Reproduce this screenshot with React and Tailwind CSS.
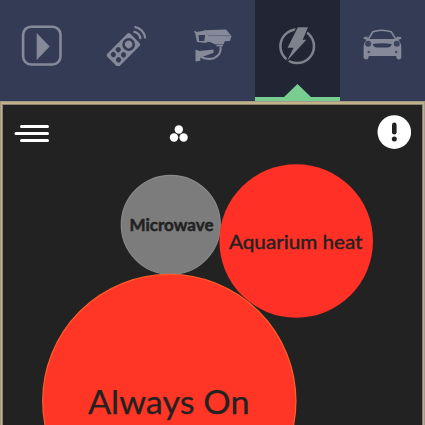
const INK = '#858999';

function PlayIcon() {
  return (
    <svg viewBox="0.5 0.5 44 44" className="size-11" fill="none">
      <rect x="2.600" y="5.200" width="37.400" height="37.800" rx="8" stroke={INK} strokeWidth="2.600" />
      <path d="M16.200 11.500v27l13-13.500z" fill={INK} />
    </svg>
  );
}

function RemoteIcon() {
  return (
    <svg viewBox="1 0 44 44" className="size-11" fill="none">
      <g transform="rotate(45 18.500 27.500)">
        <rect x="10" y="11.500" width="17.400" height="32.600" rx="2.600" fill={INK} />
        <circle cx="18.600" cy="20.300" r="6.400" fill="#343b55" />
        <circle cx="18.600" cy="20.300" r="3.700" fill={INK} />
        <circle cx="14.900" cy="31.300" r="2.600" fill="#343b55" />
        <circle cx="22.300" cy="31.300" r="2.600" fill="#343b55" />
        <circle cx="14.900" cy="38.300" r="2.600" fill="#343b55" />
        <circle cx="22.300" cy="38.300" r="2.600" fill="#343b55" />
      </g>
      <path d="M28.500 9.700a8.500 8.500 0 0 1 7 7.500M29.500 4.900a12.500 12.500 0 0 1 10.700 11.500" stroke={INK} strokeWidth="2.300" />
    </svg>
  );
}

function CameraIcon() {
  return (
    <svg viewBox="0 0 44 44" className="size-11" fill="none">
      <path d="M13 8.200l22-.7 5.500 6.500-1.500 5-24 1z" fill={INK} />
      <path d="M13.500 9l4 4.500 22 0.300" stroke="#5c6277" strokeWidth="0.800" />
      <path d="M4 10.200l10-1.700 3 4.500-1.500 8-9.500-1z" fill={INK} />
      <path d="M7.500 13h6.700l-1 6H8z" fill="#343b55" />
      <path d="M3.300 9.300l3 2" stroke={INK} strokeWidth="1.500" />
      <path d="M17 19l17 0-1.500 3.500h-8z" fill={INK} />
      <path d="M25.500 23.700h6.500" stroke={INK} strokeWidth="1.400" />
      <path d="M29.500 24.500c1 7-3.500 11.500-9 12.200-5 .6-8.500-.3-11-2" stroke={INK} strokeWidth="2.100" />
      <path d="M4.500 27.500l4 1.500 14-1.400v3.200l-13.200 5v3l-4.800.8z" fill={INK} />
    </svg>
  );
}

function PowerIcon() {
  return (
    <svg viewBox="0 0 44 44" className="size-11" fill="none">
      <circle cx="21.200" cy="24.200" r="16.800" stroke="#7f828c" strokeWidth="2.500" />
      <path d="M21.500 4.500h11.500l-5.300 12.500h4.300L8.300 43l8.200-16.500h-6z" fill="#7f828c" stroke="#222634" strokeWidth="1.300" />
    </svg>
  );
}

function CarIcon() {
  return (
    <svg viewBox="0.7 0 44 44" className="size-11" fill="none">
      <path d="M7.500 18l5-8.200c5-1.800 13-1.800 18.500 0l5 8.200" stroke={INK} strokeWidth="1.600" />
      <path d="M8 17h27.500l1.500-2.500 4 .7v1.600l-3 .9c2 2 3 4.500 3 8V35c0 1.500-.8 2.500-2.300 2.500S36 36.500 36 35v-1H8.300v1c0 1.500-1 2.500-2.500 2.500S3.300 36.500 3.300 35v-9c0-3.500.8-6.300 3-8.300l-3-.9v-1.600l3.500-.7z" fill={INK} />
      <path d="M12.500 22c6-1 12-1 19 0-.4 2.500-2.500 3.500-4.500 3.500H17c-2.500 0-4-1-4.500-3.500z" fill="#343b55" />
      <circle cx="7.800" cy="21.800" r="3" fill="#3d445e" />
      <circle cx="36.500" cy="21.800" r="3" fill="#3d445e" />
      <circle cx="8.500" cy="30" r="1.300" fill="#464d65" />
      <circle cx="35.800" cy="30" r="1.300" fill="#464d65" />
    </svg>
  );
}

const TAB = 'flex h-full w-[85px] shrink-0 flex-col items-center pt-[22px]';

function Nav() {
  return (
    <nav className="flex h-[101px] bg-[#343b55]">
      <div className={TAB}><PlayIcon /></div>
      <div className={TAB}><RemoteIcon /></div>
      <div className={TAB}><CameraIcon /></div>
      <div className={TAB + ' justify-between bg-[#222634]'}>
        <PowerIcon />
        <svg viewBox="0 0 85 18" className="block h-[18px] w-[85px]">
          <path d="M0 14h29L42.500 1 56 14h29v4H0z" fill="#79cd91" />
        </svg>
      </div>
      <div className={TAB}><CarIcon /></div>
    </nav>
  );
}

function Toolbar() {
  return (
    <header className="flex h-[55px] items-start justify-between px-[11px] pt-[10px]">
      <svg viewBox="0 0.4 36 36" className="size-9" stroke="#fff" strokeWidth="3" strokeLinecap="round">
        <path d="M7.500 12h26M2 19h31.500M7.500 26h26" />
      </svg>
      <svg viewBox="0 0 24 36" className="mr-[68px] h-9 w-6" fill="#fff">
        <circle cx="11.800" cy="14.500" r="4.200" />
        <circle cx="7" cy="22.500" r="4.200" />
        <circle cx="16.600" cy="22.500" r="4.200" />
      </svg>
      <svg viewBox="-0.5 0.4 36 36" className="size-9">
        <circle cx="18.800" cy="17.500" r="16.800" fill="#fff" />
        <path d="M18.800 10.300v7.400" stroke="#222" strokeWidth="4.600" strokeLinecap="round" />
        <circle cx="18.800" cy="24.300" r="2.500" fill="#222" />
      </svg>
    </header>
  );
}

function Bubbles() {
  return (
    <svg viewBox="3 160 419 265" className="block h-[265px] w-[419px] font-['Lato',sans-serif]" fill="#222">
      <circle cx="170.800" cy="224.800" r="49.500" fill="#7c7c7c" stroke="#898989" strokeWidth="1.200" />
      <circle cx="296.200" cy="241" r="76.800" fill="#ff3025" />
      <circle cx="169.300" cy="401" r="126.600" fill="#ff3525" stroke="#ff5a28" strokeWidth="1.300" />
      <text x="129.500" y="231" fontSize="16.800" fontWeight="700" textLength="84" lengthAdjust="spacingAndGlyphs" stroke="#222" strokeWidth="0.500">Microwave</text>
      <text x="229" y="248.700" fontSize="18.500" textLength="133.500" lengthAdjust="spacingAndGlyphs" stroke="#222" strokeWidth="0.400">Aquarium heat</text>
      <text x="88" y="413.700" fontSize="32.500" textLength="161.500" lengthAdjust="spacingAndGlyphs" stroke="#222" strokeWidth="0.250">Always On</text>
    </svg>
  );
}

export default function App() {
  return (
    <div className="flex h-[425px] w-[425px] flex-col overflow-hidden bg-[#222]">
      <Nav />
      <div className="h-[324px] border-x border-t border-[#a09a88]">
        <div className="h-full border-x border-t-2 border-[#c3b288]">
          <main className="h-full border-x border-t border-[#8a8370] bg-[#222]">
            <Toolbar />
            <Bubbles />
          </main>
        </div>
      </div>
    </div>
  );
}
